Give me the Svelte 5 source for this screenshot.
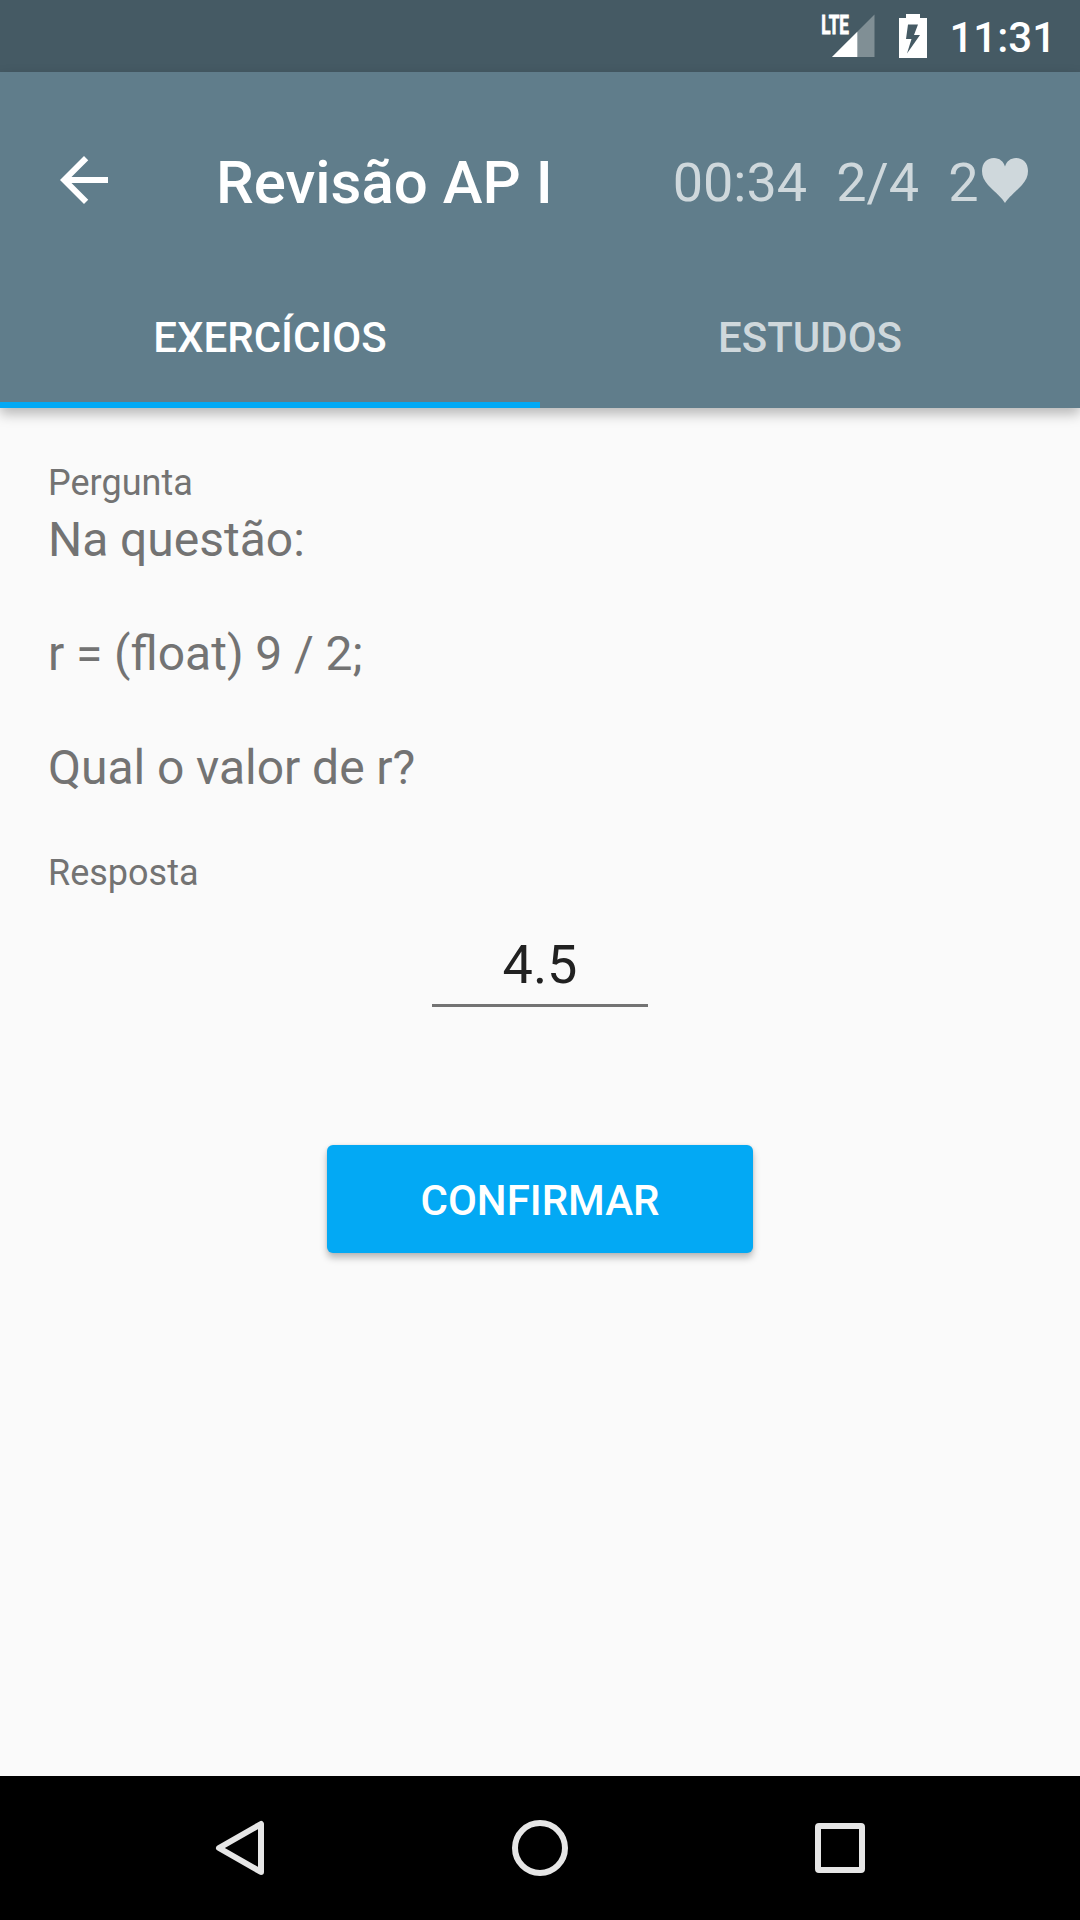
<script lang="ts">
  let tab = $state(0);
  const tabs = ['EXERCÍCIOS', 'ESTUDOS'];
  const question = 'Na questão:\n\nr = (float) 9 / 2;\n\nQual o valor de r?';
</script>

<div class="screen">
  <div class="status">
    <svg class="signal" width="56" height="48" viewBox="0 0 56 48">
      <text x="0.3" y="22.7" textLength="27.500" lengthAdjust="spacingAndGlyphs">LTE</text>
      <path d="M11 46 53.500 3.500V46Z" fill="#fff" fill-opacity=".32" />
      <path d="M11 46 36.300 20.700V46Z" fill="#fff" />
    </svg>
    <svg class="battery" width="28" height="44" viewBox="0 0 28 44">
      <path fill="#fff" fill-rule="evenodd" d="M7 0H21V4H28V44H0V4H7ZM9 10.5 7 25H12.500L8 39.500 21 21H15L19 10.500Z" />
    </svg>
    <span class="clock">11:31</span>
  </div>

  <header>
    <div class="toolbar">
      <button class="back" aria-label="Voltar">
        <svg width="72" height="72" viewBox="0 0 24 24"><path fill="#fff" d="M20 11H7.830l5.590-5.590L12 4l-8 8 8 8 1.410-1.410L7.830 13H20v-2z" /></svg>
      </button>
      <h1>Revisão AP I</h1>
      <div class="stats">
        <span class="time">00:34</span>
        <span class="progress">2/4</span>
        <span class="lives">2</span>
        <svg class="heart" width="46" height="46" viewBox="0 0 46 46"><path fill="#cfd8dc" d="M23 45C20 40 15 36 6 27C2 22.500 0 18 0 13C0 5 5 0 12 0C17.500 0 21.500 3.500 23 8.500C24.500 3.500 28.500 0 34 0C41 0 46 5 46 13C46 18 44 22.500 40 27C31 36 26 40 23 45Z" /></svg>
      </div>
    </div>
    <nav class="tabs">
      {#each tabs as label, i}
        <button class="tab" class:active={tab === i} onclick={() => (tab = i)}>{label}</button>
      {/each}
    </nav>
  </header>

  <main>
    <div class="label">Pergunta</div>
    <p>{question}</p>
    <div class="label answer">Resposta</div>
    <div class="field">4.5</div>
    <button class="confirm">CONFIRMAR</button>
  </main>

  <footer>
    <svg width="60" height="60" viewBox="0 0 60 60"><path d="M51 6V54L9 30Z" /></svg>
    <svg width="60" height="60" viewBox="0 0 60 60"><circle cx="30" cy="30" r="25" /></svg>
    <svg width="60" height="60" viewBox="0 0 60 60"><rect x="8" y="8" width="44" height="44" rx="1" /></svg>
  </footer>
</div>

<style>
  :global(body) { margin: 0; }
  .screen {
    width: 1080px;
    height: 1920px;
    display: flex;
    flex-direction: column;
    background: #fafafa;
    font-family: Roboto, sans-serif;
    overflow: hidden;
  }
  button {
    border: 0;
    padding: 0;
    background: none;
    font-family: inherit;
  }
  svg { display: block; flex: none; }
  .status {
    height: 72px;
    background: #455a64;
    display: flex;
    align-items: flex-start;
    justify-content: flex-end;
    padding-right: 24px;
    box-sizing: border-box;
    color: #fff;
  }
  .signal { margin: 11px 22px 0 0; }
  .signal text { font: 700 26px Roboto, sans-serif; fill: #fff; stroke: #fff; stroke-width: 0.9; }
  .battery { margin: 14px 22px 0 0; }
  .clock { font-size: 42px; font-weight: 500; line-height: 76px; }
  header {
    height: 336px;
    background: #607d8b;
    box-shadow: 0 6px 12px rgba(0, 0, 0, 0.27);
    display: flex;
    flex-direction: column;
    flex: none;
  }
  .toolbar { height: 192px; display: flex; align-items: flex-start; padding: 13px 0 0 48px; box-sizing: border-box; }
  .back { height: 72px; margin-top: 59px; }
  h1 {
    margin: 0 0 0 96px;
    font-size: 60px;
    font-weight: 500;
    line-height: 195px;
    color: #fff;
    white-space: nowrap;
  }
  .stats { margin-left: auto; display: flex; color: #cfd8dc; font-size: 54px; line-height: 195px; padding-right: 52px; }
  .time, .progress { margin-right: 29px; }
  .lives { margin-right: 3.5px; }
  .heart { margin-top: 73px; }
  .tabs { display: flex; flex: 1; }
  .tab {
    flex: 1;
    font-size: 42px;
    font-weight: 500;
    line-height: 50px;
    color: #cfd8dc;
    border-bottom: 6px solid transparent;
    padding-top: 10px;
  }
  .tab.active { color: #fff; border-color: #03a9f4; }
  main {
    flex: 1;
    display: flex;
    flex-direction: column;
    align-items: flex-start;
    padding: 54px 48px 0;
    color: #737373;
  }
  .label { font-size: 36px; line-height: 42px; }
  p { margin: 7px 0 0; font-size: 48px; line-height: 57px; word-spacing: -0.2px; white-space: pre-line; }
  .answer { margin-top: 56px; }
  .field {
    align-self: center;
    width: 216px;
    margin-top: 35px;
    font-size: 54px;
    line-height: 72px;
    padding-bottom: 3px;
    border-bottom: 3px solid #737373;
    color: #212121;
    text-align: center;
  }
  .confirm {
    align-self: center;
    width: 426px;
    height: 108px;
    margin-top: 138px;
    padding-top: 2px;
    border-radius: 6px;
    background: #03a9f4;
    color: #fff;
    font-size: 42px;
    font-weight: 500;
    box-shadow: 0 5px 7px rgba(0, 0, 0, 0.25), 0 0 3px rgba(0, 0, 0, 0.1);
  }
  footer {
    height: 144px;
    background: #000;
    display: flex;
    align-items: center;
    justify-content: center;
    gap: 240px;
  }
  footer svg { fill: none; stroke: #e6e6e6; stroke-width: 6; stroke-linejoin: round; }
</style>
